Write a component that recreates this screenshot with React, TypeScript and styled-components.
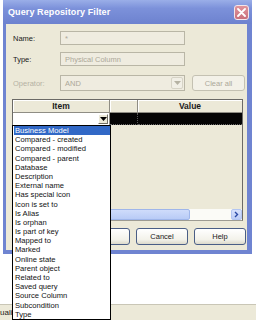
import React from 'react'
import styled, { createGlobalStyle } from 'styled-components'

const GlobalStyle = createGlobalStyle`
  html, body {
    margin: 0;
    padding: 0;
    background: #ffffff;
  }
  body {
    font-family: "Liberation Sans", Arial, sans-serif;
  }
  * {
    box-sizing: border-box;
  }
`

const ITEMS = [
  'Business Model',
  'Compared - created',
  'Compared - modified',
  'Compared - parent',
  'Database',
  'Description',
  'External name',
  'Has special icon',
  'Icon is set to',
  'Is Alias',
  'Is orphan',
  'Is part of key',
  'Mapped to',
  'Marked',
  'Online state',
  'Parent object',
  'Related to',
  'Saved query',
  'Source Column',
  'Subcondition',
  'Type',
]

const Screen = styled.div`
  position: relative;
  width: 256px;
  height: 320px;
  overflow: hidden;
  background: #ffffff;
  display: flex;
  flex-direction: column;
`

const Dialog = styled.div`
  margin-left: 3px;
  width: 249px;
  height: 254px;
  display: flex;
  flex-direction: column;
  background: #6f84d1;
`

const TitleBar = styled.div`
  height: 24px;
  display: flex;
  align-items: center;
  justify-content: space-between;
  padding: 0 3px 0 5px;
  background: linear-gradient(180deg, #9aaee8 0%, #7c91da 35%, #6d82cf 100%);
`

const Title = styled.span`
  color: #ffffff;
  font-size: 9px;
  font-weight: bold;
  letter-spacing: 0.1px;
`

const CloseButton = styled.div`
  width: 15px;
  height: 15px;
  border: 1px solid #f4e6ea;
  border-radius: 3px;
  background: linear-gradient(180deg, #e0949c 0%, #c9707c 100%);
  display: flex;
  align-items: center;
  justify-content: center;
`

const Body = styled.div`
  flex: 1;
  margin: 0 5px 4px 3px;
  background: #ece9d8;
  padding-top: 7px;
  display: flex;
  flex-direction: column;
`

const FieldRow = styled.div<{ $height: number; $after: number }>`
  display: flex;
  align-items: center;
  height: ${p => p.$height}px;
  margin-bottom: ${p => p.$after}px;
`

const Label = styled.span<{ $disabled?: boolean }>`
  width: 54px;
  padding-left: 7px;
  font-size: 7.5px;
  color: ${p => (p.$disabled ? '#b5b2a3' : '#1a1a1a')};
`

const TextBox = styled.div`
  width: 125px;
  height: 100%;
  border: 1px solid #b9b6a6;
  background: #efece0;
  color: #aca899;
  font-size: 7.5px;
  display: flex;
  align-items: center;
  padding-left: 4px;
`

const SelectBox = styled(TextBox)`
  justify-content: space-between;
  padding-right: 1px;
`

const SelectArrow = styled.div`
  width: 12px;
  height: 12px;
  border: 1px solid #d6d3c6;
  border-radius: 2px;
  background: #f1efe6;
  display: flex;
  align-items: center;
  justify-content: center;
`

const DisabledButton = styled.div`
  margin-left: 7px;
  width: 53px;
  height: 16px;
  border: 1px solid #c4c1b2;
  border-radius: 3px;
  background: #f3f1e8;
  color: #aca899;
  font-size: 7.5px;
  display: flex;
  align-items: center;
  justify-content: center;
`

const Grid = styled.div`
  margin-left: 6px;
  width: 231px;
  height: 122px;
  border: 1px solid #6b6a66;
  border-bottom-color: #9d9b92;
  display: flex;
  flex-direction: column;
  background: #ece9d8;
`

const GridRow = styled.div<{ $height: number }>`
  display: grid;
  grid-template-columns: 97px 28px 1fr;
  height: ${p => p.$height}px;
`

const HeaderCell = styled.div`
  border-right: 1px solid #8f8d84;
  border-bottom: 1px solid #8f8d84;
  box-shadow: inset 1px 1px 0 #ffffff;
  font-size: 8.5px;
  font-weight: bold;
  color: #1a1a1a;
  display: flex;
  align-items: center;
  justify-content: center;
  &:last-child {
    border-right: none;
  }
`

const ComboCell = styled.div`
  position: relative;
  background: #ffffff;
  border-right: 1px solid #8f8d84;
  display: flex;
  justify-content: flex-end;
  align-items: stretch;
  padding: 1px 1px 1px 0;
`

const ComboArrow = styled.div`
  width: 10px;
  background: #ece9d8;
  border: 1px solid #ffffff;
  border-right-color: #716f64;
  border-bottom-color: #716f64;
  display: flex;
  align-items: center;
  justify-content: center;
`

const DarkCell = styled.div`
  background: #050505;
  border-bottom: 1px dotted #6a6a6a;
  border-right: 1px dotted #5a5a5a;
  &:last-child {
    border-right: none;
  }
`

const GridBody = styled.div`
  flex: 1;
`

const ScrollBar = styled.div`
  height: 11px;
  display: flex;
  background: #fbfbf7;
`

const ScrollThumb = styled.div`
  width: 177px;
  border: 1px solid #9fb6ea;
  border-radius: 2px;
  background: linear-gradient(180deg, #cfdcfb 0%, #b8cbf6 100%);
`

const ScrollTrack = styled.div`
  flex: 1;
`

const ScrollButton = styled.div`
  width: 11px;
  border: 1px solid #b3c6f2;
  border-radius: 2px;
  background: linear-gradient(180deg, #d7e2fd 0%, #bccdf7 100%);
  display: flex;
  align-items: center;
  justify-content: center;
`

const DropList = styled.ul`
  position: absolute;
  left: -1px;
  top: 100%;
  width: 99px;
  margin: 0;
  padding: 0 0 0 1px;
  list-style: none;
  background: #ffffff;
  border: 1px solid #000000;
  z-index: 5;
`

const DropItem = styled.li<{ $selected?: boolean }>`
  height: 9.2px;
  line-height: 9.2px;
  font-size: 7.6px;
  padding-left: 1px;
  white-space: nowrap;
  color: ${p => (p.$selected ? '#ffffff' : '#111111')};
  background: ${p => (p.$selected ? '#3168c6' : 'transparent')};
`

const ButtonRow = styled.div`
  margin-top: 7px;
  height: 17px;
  display: flex;
  justify-content: flex-end;
  gap: 6px;
  padding-right: 1px;
`

const PushButton = styled.div`
  width: 52px;
  height: 17px;
  border: 1px solid #4a5e86;
  border-radius: 3px;
  background: linear-gradient(180deg, #ffffff 0%, #f3f2ea 70%, #dcd9cb 100%);
  font-size: 7.5px;
  color: #1a1a1a;
  display: flex;
  align-items: center;
  justify-content: center;
`

const StatusBar = styled.div`
  margin-top: auto;
  height: 16px;
  border-top: 1px solid #c9c6b6;
  background: #ece9d8;
  font-size: 8px;
  color: #1a1a1a;
  display: flex;
  align-items: center;
`

const Down = ({ color }: { color: string }) => (
  <svg width="7" height="4" viewBox="0 0 7 4">
    <path d="M0 0h7L3.5 4z" fill={color} />
  </svg>
)

export default function App() {
  return (
    <Screen>
      <GlobalStyle />
      <Dialog>
        <TitleBar>
          <Title>Query Repository Filter</Title>
          <CloseButton>
            <svg width="9" height="9" viewBox="0 0 9 9">
              <path d="M1 1l7 7M8 1l-7 7" stroke="#ffffff" strokeWidth="1.8" strokeLinecap="round" />
            </svg>
          </CloseButton>
        </TitleBar>
        <Body>
          <FieldRow $height={14} $after={7}>
            <Label>Name:</Label>
            <TextBox>*</TextBox>
          </FieldRow>
          <FieldRow $height={14} $after={9}>
            <Label>Type:</Label>
            <TextBox>Physical Column</TextBox>
          </FieldRow>
          <FieldRow $height={16} $after={8}>
            <Label $disabled>Operator:</Label>
            <SelectBox>
              AND
              <SelectArrow>
                <Down color="#b5b2a3" />
              </SelectArrow>
            </SelectBox>
            <DisabledButton>Clear all</DisabledButton>
          </FieldRow>
          <Grid>
            <GridRow $height={13}>
              <HeaderCell>Item</HeaderCell>
              <HeaderCell />
              <HeaderCell>Value</HeaderCell>
            </GridRow>
            <GridRow $height={12}>
              <ComboCell>
                <ComboArrow>
                  <Down color="#000000" />
                </ComboArrow>
                <DropList>
                  {ITEMS.map((item, i) => (
                    <DropItem key={item} $selected={i === 0}>
                      {item}
                    </DropItem>
                  ))}
                </DropList>
              </ComboCell>
              <DarkCell />
              <DarkCell />
            </GridRow>
            <GridBody />
            <ScrollBar>
              <ScrollThumb />
              <ScrollTrack />
              <ScrollButton>
                <svg width="5" height="7" viewBox="0 0 5 7">
                  <path d="M1 1l2.5 2.5L1 6" stroke="#2b4aa6" strokeWidth="1.4" fill="none" />
                </svg>
              </ScrollButton>
            </ScrollBar>
          </Grid>
          <ButtonRow>
            <PushButton>OK</PushButton>
            <PushButton>Cancel</PushButton>
            <PushButton>Help</PushButton>
          </ButtonRow>
        </Body>
      </Dialog>
      <StatusBar>uali</StatusBar>
    </Screen>
  )
}
